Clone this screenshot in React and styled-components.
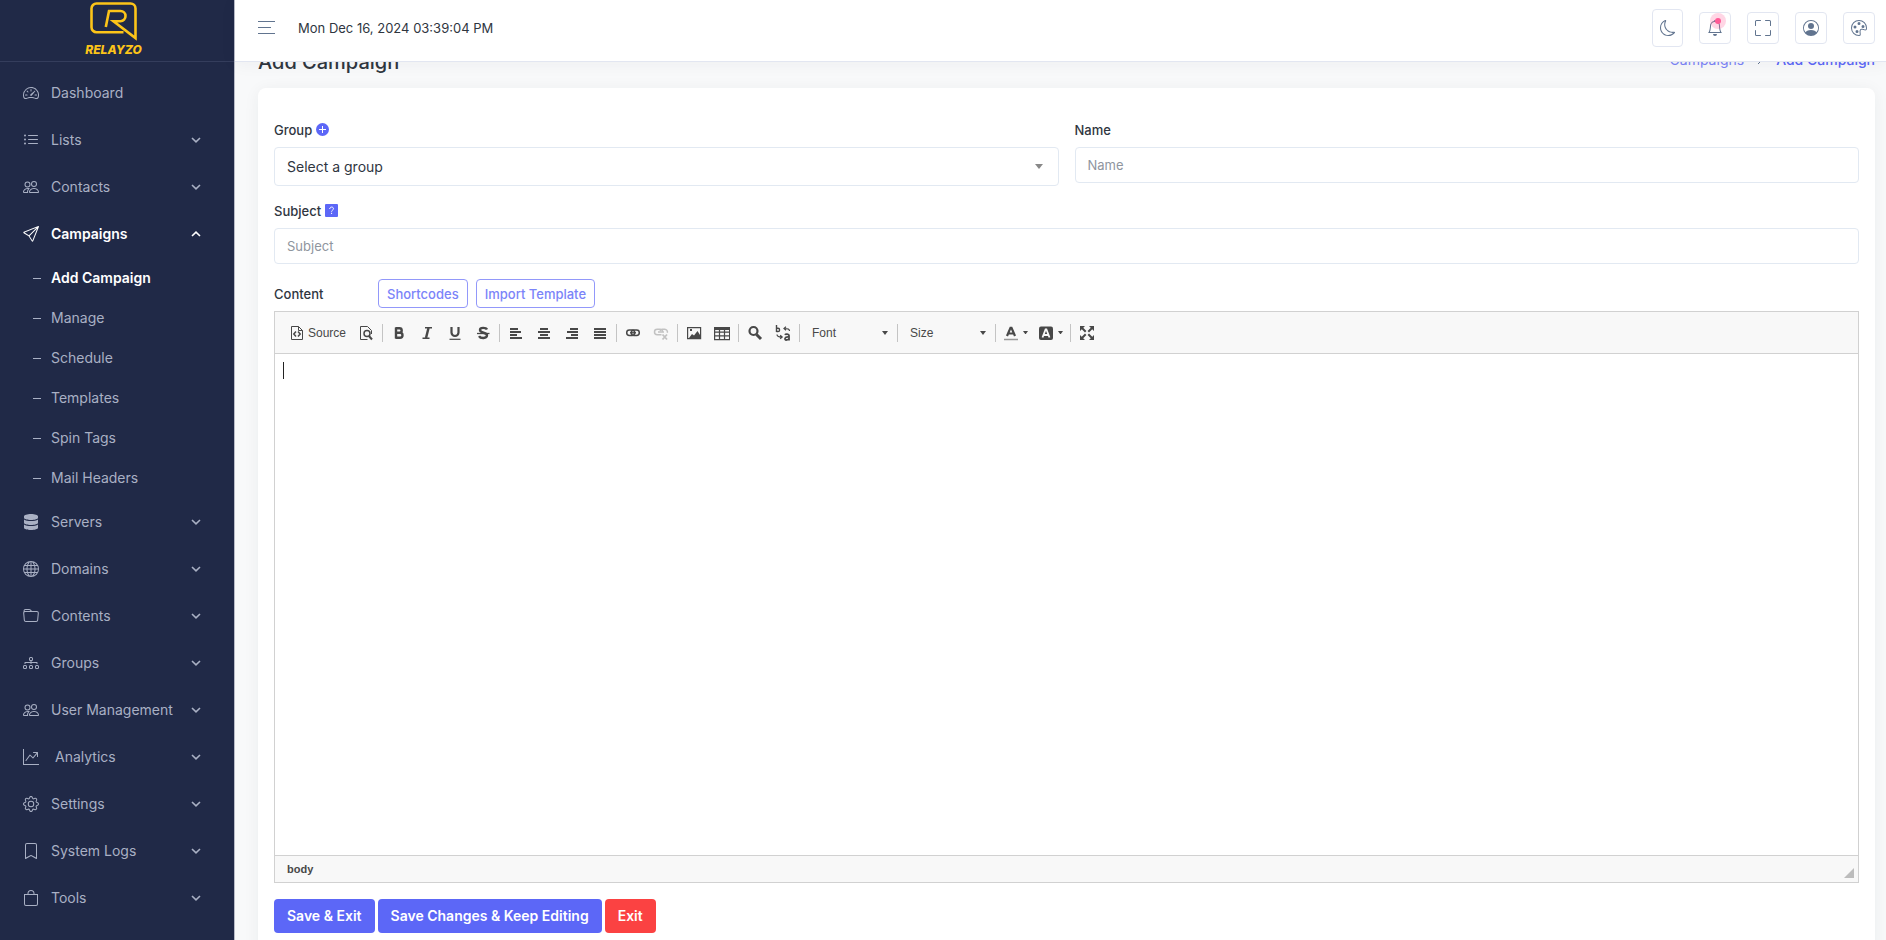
import React from "react";
import styled, { createGlobalStyle, css } from "styled-components";
import {
  BsSpeedometer2, BsListUl, BsPeople, BsSend, BsGlobe, BsFolder, BsDiagram3,
  BsGraphUpArrow, BsGear, BsBookmark, BsBag, BsMoon, BsBell, BsFullscreen,
  BsPersonCircle, BsPalette,
} from "react-icons/bs";
import { FaDatabase } from "react-icons/fa";

const GlobalStyle = createGlobalStyle`
  *, *::before, *::after { box-sizing: border-box; }
  body {
    margin: 0;
    background: #f8f9fa;
    color: #2f363f;
    font-family: Inter, "Open Sans", sans-serif;
    font-size: 14px;
    line-height: 20px;
  }
  button, input, select, textarea { font: inherit; color: inherit; margin: 0; }
  a { color: inherit; text-decoration: none; }
  ul { list-style: none; margin: 0; padding: 0; }
`;

const Shell = styled.div`
  display: flex;
  height: 100vh;
  overflow: hidden;
`;

const Sidebar = styled.aside`
  flex: 0 0 235px;
  background: #202947;
  border-right: 1px solid #b9bcc8;
  color: #a9b0c4;
`;

const Brand = styled.a`
  display: flex;
  flex-direction: column;
  align-items: center;
  height: 62px;
  padding: 2px 7px 0 0;
  border-bottom: 1px solid #343d5c;
  color: #fcc419;
`;

const BrandName = styled.span`
  font-size: 12px;
  line-height: 16px;
  font-weight: 800;
  font-style: italic;
`;

const Menu = styled.ul`
  padding-top: 7px;
`;

const SubMenu = styled.ul`
  padding-top: 1px;
`;

const MenuLink = styled.a`
  display: flex;
  align-items: center;
  height: 47px;
  padding: 0 33px 0 23px;
  font-weight: ${(p) => (p.$active ? 600 : 400)};
  color: ${(p) => (p.$active ? "#fff" : "inherit")};
  svg { flex: none; }
`;

const MenuText = styled.span`
  flex: 1;
  margin-left: ${(p) => (p.$wide ? 16 : 12)}px;
  white-space: nowrap;
`;

const SubLink = styled.a`
  display: flex;
  align-items: center;
  height: 40px;
  gap: 10px;
  padding-left: 33px;
  font-weight: ${(p) => (p.$active ? 600 : 400)};
  color: ${(p) => (p.$active ? "#fff" : "inherit")};
  &::before {
    content: "";
    width: 8px;
    height: 1px;
    background: #a9b0c4;
  }
`;

const Page = styled.div`
  flex: 1;
  min-width: 0;
  display: flex;
  flex-direction: column;
`;

const Header = styled.header`
  flex: none;
  display: flex;
  align-items: center;
  height: 62px;
  padding: 0 11px 6px 23px;
  gap: 23px;
  background: #fff;
  border-bottom: 1px solid #e2e6f1;
  box-shadow: 0 2px 16px rgba(40, 44, 56, 0.05);
  z-index: 1;
`;

const MenuToggle = styled.button`
  display: flex;
  padding: 0;
  border: 0;
  background: none;
  color: #61748f;
`;

const Clock = styled.time`
  flex: 1;
  font-size: 13px;
`;

const Tools = styled.div`
  display: flex;
  align-items: center;
  gap: 16px;
`;

const ToolButton = styled.button`
  position: relative;
  display: flex;
  align-items: center;
  justify-content: center;
  width: ${(p) => (p.$tall ? 31 : 32)}px;
  height: ${(p) => (p.$tall ? 38 : 32)}px;
  padding: 0;
  border: 1px solid #e2e6f1;
  border-radius: 4px;
  background: #fff;
  color: #61748f;
`;

const Pulse = styled.span`
  position: absolute;
  top: 0;
  right: 4px;
  display: flex;
  width: 16px;
  height: 16px;
  padding: 5px;
  border-radius: 50%;
  background: rgba(255, 90, 150, 0.25);
  &::before {
    content: "";
    flex: 1;
    border-radius: 50%;
    background: #ff5a96;
  }
`;

const Main = styled.main`
  flex: 1;
  min-height: 0;
  overflow: hidden;
  padding: 0 11px 0 23px;
`;

const TitleBar = styled.div`
  display: flex;
  justify-content: space-between;
  align-items: center;
  height: 24px;
  margin: -12px 0 14px;
`;

const Title = styled.h1`
  margin: 0;
  font-size: 20px;
  line-height: 24px;
  font-weight: 500;
`;

const Crumbs = styled.nav`
  display: flex;
  gap: 12px;
  color: #5c67f7;
  padding-bottom: 4px;
  svg { margin-top: 4px; }
`;

const CrumbLink = styled.a`
  font-weight: ${(p) => (p.$current ? 500 : 400)};
  opacity: ${(p) => (p.$current ? 1 : 0.8)};
`;

const Card = styled.form`
  padding: 30px 16px 24px;
  background: #fff;
  border-radius: 8px;
  box-shadow: 0 2px 16px rgba(40, 44, 56, 0.06);
`;

const Columns = styled.div`
  display: grid;
  grid-template-columns: 1fr 1fr;
  gap: 16px;
  align-items: start;
`;

const Field = styled.div`
  display: flex;
  flex-direction: column;
  gap: 6px;
`;

const LabelRow = styled.div`
  display: flex;
  align-items: center;
  gap: 4px;
  height: 23px;
  font-size: 13px;
  font-weight: 500;
`;

const Badge = styled.button`
  display: flex;
  padding: 0;
  border: 0;
  background: none;
`;

const control = css`
  width: 100%;
  border: 1px solid #e2e9f2;
  border-radius: 4px;
  background: #fff;
  padding: 0 12px;
  outline: none;
`;

const Input = styled.input`
  ${control}
  height: 36px;
  font-size: 13px;
  &::placeholder { color: #8f959e; opacity: 1; }
`;

const SelectWrap = styled.div`
  display: grid;
  align-items: center;
  > * { grid-area: 1 / 1; }
  > svg {
    justify-self: end;
    margin-right: ${(p) => p.$inset}px;
    pointer-events: none;
  }
`;

const Select = styled.select`
  ${control}
  height: 39px;
  appearance: none;
`;

const SubjectField = styled(Field)`
  margin-top: 13px;
`;

const ContentRow = styled.div`
  display: flex;
  align-items: center;
  gap: 8px;
  margin: 15px 0 3px;
`;

const ContentLabel = styled.label`
  width: 96px;
  font-size: 13px;
  font-weight: 500;
`;

const OutlineButton = styled.button`
  height: 29px;
  padding: 0 8px;
  border: 1px solid #9298fa;
  border-radius: 4px;
  background: #fff;
  color: #7b84f9;
  font-size: 13px;
  font-weight: 500;
`;

const Editor = styled.div`
  border: 1px solid #d1d1d1;
  color: #484848;
  font-family: "Liberation Sans", Arial, sans-serif;
`;

const Toolbar = styled.div`
  display: flex;
  align-items: center;
  height: 42px;
  padding: 0 8px;
  background: #f8f8f8;
  border-bottom: 1px solid #d1d1d1;
`;

const EditButton = styled.button`
  display: flex;
  align-items: center;
  justify-content: center;
  gap: ${(p) => (p.$split ? 4 : 3)}px;
  min-width: 28px;
  height: 28px;
  padding: 0 ${(p) => (p.$split ? 5 : 6)}px;
  border: 0;
  background: none;
  font-size: 12px;
  opacity: ${(p) => (p.disabled ? 0.3 : 1)};
  svg { flex: none; }
`;

const Divider = styled.span`
  width: 1px;
  height: 18px;
  margin: 0 2px;
  background: #c4c4c4;
`;

const ComboSelect = styled.select`
  appearance: none;
  width: 93px;
  height: 28px;
  padding: 0 10px;
  border: 0;
  background: none;
  font-size: 12px;
  outline: none;
`;

const EditBody = styled.div`
  position: relative;
`;

const EditArea = styled.textarea`
  display: block;
  width: 100%;
  height: 501px;
  padding: 8px;
  border: 0;
  resize: none;
  outline: none;
  background: #fff;
  font-size: 13px;
  caret-color: transparent;
`;

const TextCursor = styled.span`
  position: absolute;
  top: 8px;
  left: 8px;
  width: 1px;
  height: 17px;
  background: #222;
  pointer-events: none;
`;

const StatusBar = styled.div`
  display: flex;
  justify-content: space-between;
  align-items: center;
  height: 27px;
  padding: 0 4px 0 12px;
  background: #f8f8f8;
  border-top: 1px solid #d1d1d1;
  font-size: 11px;
  font-weight: 700;
  svg { margin-top: 8px; }
`;

const Actions = styled.div`
  display: flex;
  gap: 3px;
  margin-top: 16px;
`;

const ActionButton = styled.button`
  height: 34px;
  padding: 0 13px;
  border: 0;
  border-radius: 4px;
  background: ${(p) => (p.$danger ? "#fb4242" : "#5c67f7")};
  color: #fff;
  font-weight: 600;
`;

const Logo = () => (
  <svg width="48" height="40" viewBox="0 0 48 40" fill="none" stroke="currentColor" strokeWidth="2.6">
    <path d="M33.5 30.2H6.5a5 5 0 0 1-5-5V6.500a5 5 0 0 1 5-5h34a5 5 0 0 1 5 5V36L23.500 19.200H30.500a5 5 0 0 0 5-5.200a5 5 0 0 0-5-5H19L15.800 25" />
  </svg>
);

const Chevron = ({ up }) => (
  <svg width="10" height="6" viewBox="0 0 10 6" fill="none" stroke="currentColor" strokeWidth="1.6">
    <path d={up ? "M1 5l4-3.800L9 5" : "M1 1l4 3.800L9 1"} />
  </svg>
);

const Caret = ({ size = 6, color = "#484848" }) => (
  <svg width={size} height={size / 2 + 1} viewBox="0 0 8 5" preserveAspectRatio="none" fill={color}>
    <path d="M0 0h8L4 5z" />
  </svg>
);

const Icon = ({ children, ...rest }) => (
  <svg width="16" height="16" viewBox="0 0 16 16" fill="none" stroke="currentColor" strokeWidth="1.5" {...rest}>
    {children}
  </svg>
);

const alignLines = {
  left: [[2, 10], [2, 13], [2, 9], [2, 14]],
  center: [[4, 12], [2, 14], [4, 12], [2, 14]],
  right: [[6, 14], [3, 14], [7, 14], [2, 14]],
  justify: [[2, 14], [2, 14], [2, 14], [2, 14]],
};
const AlignIcon = ({ kind }) => (
  <Icon strokeWidth="2">
    {alignLines[kind].map(([a, b], i) => (
      <path key={i} d={`M${a} ${4 + i * 3}H${b}`} />
    ))}
  </Icon>
);

const SourceIcon = () => (
  <Icon>
    <path strokeWidth="1" d="M9.500 1.500h-7v13h11v-9zM9.500 1.500v4h4" />
    <path d="M7 6.500L4.800 9 7 11.500M9 6.500L11.200 9 9 11.500" />
  </Icon>
);
const PreviewIcon = () => (
  <Icon>
    <path strokeWidth="1" d="M13.500 9V5.500l-4-4h-7v13h7" />
    <circle cx="9" cy="8.500" r="3" /><path strokeWidth="2" d="M11 11l3 3.500" />
  </Icon>
);
const BoldIcon = () => (
  <Icon strokeWidth="2.400"><path d="M4.500 3.200h4a2.200 2.200 0 0 1 0 4.400h-3.500M5 7.700h4a2.500 2.500 0 0 1 0 5h-4.500M5 2.500v11" /></Icon>
);
const ItalicIcon = () => (
  <Icon><path d="M6 2.800h7M3.500 13.200h7" /><path strokeWidth="2.400" d="M9.500 3l-2.500 10" /></Icon>
);
const UnderlineIcon = () => (
  <Icon><path strokeWidth="2.200" d="M4.500 2v5.500a3.500 3.500 0 0 0 7 0V2" /><path d="M2.500 14.300h11" strokeWidth="1.200" /></Icon>
);
const StrikeIcon = () => (
  <Icon><path strokeWidth="2.400" d="M12 4.500C11 2.500 5 2 5 5c0 3.300 7 2.200 7 5.300 0 3.500-6.500 3.400-8 .8" /><path d="M2 8.500h12.500" strokeWidth="1.300" /></Icon>
);
const LinkIcon = () => (
  <Icon>
    <rect x="1.700" y="5" width="8" height="5.500" rx="2.700" />
    <rect x="6.300" y="5" width="8" height="5.500" rx="2.700" />
    <path d="M5 7.750h6" strokeWidth="1.300" />
  </Icon>
);
const UnlinkIcon = () => (
  <Icon>
    <path d="M8.500 9.700H4.200a2.700 2.700 0 0 1 0-5.400h3a2.700 2.700 0 0 1 2.500 2M7 5.800a2.700 2.700 0 0 1 2.300-1.500h2.500a2.700 2.700 0 0 1 2.500 3.500M5 7h6" />
    <path d="M9.500 9.500l4.500 5M14 9.500l-4.500 5" strokeWidth="1.800" />
  </Icon>
);
const ImageIcon = () => (
  <Icon>
    <path strokeWidth="1.200" d="M1.600 2.600h13v11h-13z" />
    <path fill="currentColor" stroke="none" d="M3 13l3-4 2 1.500L11.500 6 14 10v3zM4 4h2v2H4z" />
  </Icon>
);
const TableIcon = () => (
  <Icon strokeWidth="1.200">
    <path d="M.6 2.600h15v12H.6zM1 7.200h14M1 10.800h14M5.500 5v9M10.500 5v9" />
    <path fill="currentColor" stroke="none" d="M0 2h16v3H0z" />
  </Icon>
);
const FindIcon = () => (
  <Icon><circle cx="6.500" cy="6" r="4" strokeWidth="2.200" /><path strokeWidth="3" d="M9.500 9.500L14 14" /></Icon>
);
const ReplaceIcon = () => (
  <Icon strokeWidth="1.400">
    <path d="M1.500 0v7M1.500 6.500h1.500a1.600 1.600 0 0 0 0-3.200h-1.500" />
    <path d="M14 15.500v-5c0-1.800-3.500-1.800-4-.6M14 12c-5-.5-4.500 3-2.800 3 1.500 0 2.500-.8 2.800-1.500" strokeWidth="1.800" />
    <path d="M14.500 6c0-2-1.500-2.500-5-2.500M11 1.800L9 3.500 11 5.200M2 9.500c0 2 1.500 2.500 4.500 2.500M5.200 10.200L7.200 12 5.200 13.800" strokeWidth="1.200" />
  </Icon>
);
const TextColorIcon = () => (
  <Icon><path strokeWidth="2.200" d="M4 11L7.500 2.800h1L12 11M5.500 8.500h5" /><path stroke="#999" d="M1 14.500h14" /></Icon>
);
const BgColorIcon = () => (
  <Icon>
    <rect x="1" y="1.500" width="14" height="13.500" rx="2" fill="currentColor" stroke="none" />
    <path stroke="#f8f8f8" strokeWidth="1.800" d="M4.500 12.500L7.600 4.500h.8L11.500 12.500M5.800 10h4.500" />
  </Icon>
);
const MaximizeIcon = () => (
  <Icon>
    <path strokeWidth="2" d="M3 3l3.700 3.700M13 3L9.300 6.700M3 13l3.700-3.700M13 13L9.300 9.300" />
    <path fill="currentColor" stroke="none" d="M1 1h5L1 6zM15 1h-5l5 5zM1 15h5l-5-5zM15 15h-5l5-5z" />
  </Icon>
);

const subItems = ["Add Campaign", "Manage", "Schedule", "Templates", "Spin Tags", "Mail Headers"];
const menuItems = [
  { text: "Dashboard", icon: BsSpeedometer2, leaf: true },
  { text: "Lists", icon: BsListUl },
  { text: "Contacts", icon: BsPeople },
  { text: "Campaigns", icon: BsSend, children: subItems },
  { text: "Servers", icon: FaDatabase },
  { text: "Domains", icon: BsGlobe },
  { text: "Contents", icon: BsFolder },
  { text: "Groups", icon: BsDiagram3 },
  { text: "User Management", icon: BsPeople },
  { text: "Analytics", icon: BsGraphUpArrow, wide: true },
  { text: "Settings", icon: BsGear },
  { text: "System Logs", icon: BsBookmark },
  { text: "Tools", icon: BsBag },
];

const MenuItem = ({ item }) => {
  const Glyph = item.icon;
  const open = Boolean(item.children);
  return (
    <li>
      <MenuLink href="#" $active={open}>
        <Glyph size={16} />
        <MenuText $wide={item.wide}>{item.text}</MenuText>
        {!item.leaf && <Chevron up={open} />}
      </MenuLink>
      {open && (
        <SubMenu>
          {item.children.map((t, i) => (
            <li key={t}><SubLink href="#" $active={i === 0}>{t}</SubLink></li>
          ))}
        </SubMenu>
      )}
    </li>
  );
};

const Combo = ({ name }) => (
  <SelectWrap $inset={7}>
    <ComboSelect aria-label={name}><option>{name}</option></ComboSelect>
    <Caret />
  </SelectWrap>
);

export default function App() {
  return (
    <Shell>
      <GlobalStyle />
      <Sidebar>
        <Brand href="#">
          <Logo />
          <BrandName>RELAYZO</BrandName>
        </Brand>
        <nav>
          <Menu>{menuItems.map((m) => <MenuItem key={m.text} item={m} />)}</Menu>
        </nav>
      </Sidebar>
      <Page>
        <Header>
          <MenuToggle aria-label="Toggle menu">
            <svg width="17" height="14" viewBox="0 0 17 14" stroke="currentColor">
              <path d="M0 .5h17M0 6.500h13M0 12.500h17" />
            </svg>
          </MenuToggle>
          <Clock>Mon Dec 16, 2024 03:39:04 PM</Clock>
          <Tools>
            <ToolButton $tall aria-label="Dark mode"><BsMoon size={16} /></ToolButton>
            <ToolButton aria-label="Notifications"><BsBell size={16} /><Pulse /></ToolButton>
            <ToolButton aria-label="Full screen"><BsFullscreen size={16} /></ToolButton>
            <ToolButton aria-label="Profile"><BsPersonCircle size={16} /></ToolButton>
            <ToolButton aria-label="Theme"><BsPalette size={16} /></ToolButton>
          </Tools>
        </Header>
        <Main>
          <TitleBar>
            <Title>Add Campaign</Title>
            <Crumbs>
              <CrumbLink href="#">Campaigns</CrumbLink>
              <svg width="8" height="12" viewBox="0 0 8 12" fill="none" stroke="#61748f"><path d="M2 2l4 4-4 4" /></svg>
              <CrumbLink href="#" $current>Add Campaign</CrumbLink>
            </Crumbs>
          </TitleBar>
          <Card onSubmit={(e) => e.preventDefault()}>
            <Columns>
              <Field>
                <LabelRow>
                  <label htmlFor="group">Group</label>
                  <Badge type="button" aria-label="Add group">
                    <svg width="13" height="13" viewBox="0 0 13 13" stroke="#fff">
                      <circle cx="6.500" cy="6.500" r="6.500" fill="#5c67f7" stroke="none" />
                      <path d="M3 6.500h7M6.500 3v7" />
                    </svg>
                  </Badge>
                </LabelRow>
                <SelectWrap $inset={16}>
                  <Select id="group"><option>Select a group</option></Select>
                  <Caret size={8} color="#888" />
                </SelectWrap>
              </Field>
              <Field>
                <LabelRow><label htmlFor="name">Name</label></LabelRow>
                <Input id="name" placeholder="Name" />
              </Field>
            </Columns>
            <SubjectField>
              <LabelRow>
                <label htmlFor="subject">Subject</label>
                <Badge type="button" aria-label="Subject help">
                  <svg width="13" height="13" viewBox="0 0 13 13" fill="none" stroke="#fff">
                    <rect width="13" height="13" rx="1" fill="#5c67f7" stroke="none" />
                    <path d="M4.700 5c0-2.600 3.800-2.400 3.800-.3 0 1.400-1.900 1.400-1.900 3M6.600 8.800v1.200" />
                  </svg>
                </Badge>
              </LabelRow>
              <Input id="subject" placeholder="Subject" />
            </SubjectField>
            <ContentRow>
              <ContentLabel htmlFor="content">Content</ContentLabel>
              <OutlineButton type="button">Shortcodes</OutlineButton>
              <OutlineButton type="button">Import Template</OutlineButton>
            </ContentRow>
            <Editor>
              <Toolbar>
                <EditButton type="button"><SourceIcon />Source</EditButton>
                <EditButton type="button" aria-label="Preview"><PreviewIcon /></EditButton>
                <Divider />
                <EditButton type="button" aria-label="Bold"><BoldIcon /></EditButton>
                <EditButton type="button" aria-label="Italic"><ItalicIcon /></EditButton>
                <EditButton type="button" aria-label="Underline"><UnderlineIcon /></EditButton>
                <EditButton type="button" aria-label="Strikethrough"><StrikeIcon /></EditButton>
                <Divider />
                {Object.keys(alignLines).map((k) => (
                  <EditButton key={k} type="button" aria-label={`Align ${k}`}><AlignIcon kind={k} /></EditButton>
                ))}
                <Divider />
                <EditButton type="button" aria-label="Link"><LinkIcon /></EditButton>
                <EditButton type="button" aria-label="Unlink" disabled><UnlinkIcon /></EditButton>
                <Divider />
                <EditButton type="button" aria-label="Image"><ImageIcon /></EditButton>
                <EditButton type="button" aria-label="Table"><TableIcon /></EditButton>
                <Divider />
                <EditButton type="button" aria-label="Find"><FindIcon /></EditButton>
                <EditButton type="button" aria-label="Replace"><ReplaceIcon /></EditButton>
                <Divider />
                <Combo name="Font" />
                <Divider />
                <Combo name="Size" />
                <Divider />
                <EditButton type="button" $split aria-label="Text colour"><TextColorIcon /><Caret size={5} /></EditButton>
                <EditButton type="button" $split aria-label="Background colour"><BgColorIcon /><Caret size={5} /></EditButton>
                <Divider />
                <EditButton type="button" aria-label="Maximize"><MaximizeIcon /></EditButton>
              </Toolbar>
              <EditBody>
                <EditArea id="content" autoFocus />
                <TextCursor />
              </EditBody>
              <StatusBar>
                <span>body</span>
                <svg width="10" height="10" viewBox="0 0 10 10" fill="#bcbcbc"><path d="M10 0v10H0z" /></svg>
              </StatusBar>
            </Editor>
            <Actions>
              <ActionButton>Save &amp; Exit</ActionButton>
              <ActionButton>Save Changes &amp; Keep Editing</ActionButton>
              <ActionButton type="button" $danger>Exit</ActionButton>
            </Actions>
          </Card>
        </Main>
      </Page>
    </Shell>
  );
}
